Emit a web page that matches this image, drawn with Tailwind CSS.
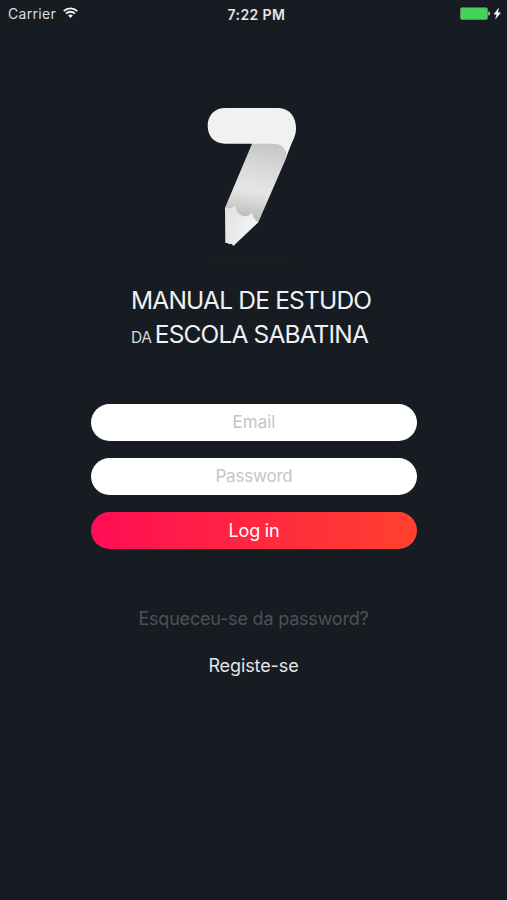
<!DOCTYPE html>
<html lang="pt">
<head>
    <meta charset="UTF-8">
    <meta name="viewport" content="width=device-width, initial-scale=1.0">
    <title>Manual de Estudo da Escola Sabatina</title>
    <script src="https://cdn.jsdelivr.net/npm/@tailwindcss/browser@4"></script>
</head>
<body class="bg-[#171c23] h-screen overflow-hidden font-['Inter',sans-serif] text-white">
    <div class="flex flex-col items-center h-full">
        <!-- Status bar -->
        <header class="w-full h-7 pl-2 pr-1.5 grid grid-cols-3 items-center text-[14px] text-[#dcdee0]">
            <div class="flex items-center gap-[7px] -mt-0.5">
                <span class="tracking-[0.3px]">Carrier</span>
                <svg class="w-[15px] h-[11px] -mt-0.5" viewBox="0 0 15 11" fill="none" stroke="#eef0f1" stroke-width="1.8">
                    <path d="M0.7 4.1a9.7 9.7 0 0 1 13.6 0M3 6.6a6.4 6.4 0 0 1 9 0" />
                    <path d="M7.5 11L5.1 8.6a3.4 3.4 0 0 1 4.8 0z" fill="#eef0f1" stroke="none" />
                </svg>
            </div>
            <div class="text-center font-semibold text-[14px] tracking-[0.4px] pl-1 text-[#e4e6e8]">7:22 PM</div>
            <div class="flex items-center justify-end -mt-0.5">
                <svg class="w-[41px] h-[13px]" viewBox="0 0 41 13">
                    <rect x="0.5" y="0.8" width="27" height="11.6" rx="1.5" fill="#44d455" stroke="#80928a" stroke-width="0.7" />
                    <path d="M28.8 4.7q1.8 1.8 0 3.6z" fill="#e6e8e9" stroke="#e6e8e9" stroke-width="0.6" />
                    <path d="M38.6 1.3L34 7.2h2.8l-1.2 4.6 5-6.1h-2.8z" fill="#fff" stroke="#fff" stroke-width="0.4" />
                </svg>
            </div>
        </header>

        <!-- Logo -->
        <svg class="w-[125px] h-[175px] mt-[67px] mr-[2px]" viewBox="0 0 375 525">
            <defs>
                <linearGradient id="body" x1="235" y1="140" x2="190" y2="370" gradientUnits="userSpaceOnUse">
                    <stop offset="0" stop-color="#c4c4c5" />
                    <stop offset="0.3" stop-color="#d6d6d7" />
                    <stop offset="0.65" stop-color="#e6e6e7" />
                    <stop offset="1" stop-color="#bebebf" />
                </linearGradient>
                <linearGradient id="tip" x1="110" y1="370" x2="190" y2="400" gradientUnits="userSpaceOnUse">
                    <stop offset="0" stop-color="#e4e4e5" />
                    <stop offset="1" stop-color="#f3f3f3" />
                </linearGradient>
            </defs>
            <path d="M187 144L105 338L120 350L150 385L205 382L290 186L280 144z" fill="url(#body)" />
            <path d="M105 338Q121 345 135 332Q140 358 160 363Q177 366 186 353Q189 374 205 382L130 453Q124 443 118 448Q112 442 106 444z" fill="url(#tip)" />
            <path d="M106 39H265C301 39 320 70 318 105C317 121 311 132 305 145L289 186C287 159 276 146 248 146H106C71 146 53 121 53 92C53 62 73 39 106 39z" fill="#f1f1f1" />
            <path d="M65 500H300" stroke="#1d1e1f" stroke-width="9" />
        </svg>

        <!-- Title -->
        <h1 class="mt-[13px] w-[245px] text-[24.5px] leading-[34px] whitespace-nowrap text-[#f0f1f3]">
            <div class="tracking-[-0.8px]">MANUAL DE ESTUDO</div>
            <div class="flex items-baseline tracking-[-0.85px]"><span class="text-[15.5px] tracking-[-0.3px] mr-[3px] text-[#d5d8da]">DA</span>ESCOLA SABATINA</div>
        </h1>

        <!-- Login form -->
        <form class="mt-[49px] ml-[1px] w-[326px] flex flex-col gap-[17.5px]">
            <input type="email" placeholder="Email" class="h-[36.5px] rounded-full bg-white text-center text-[17px] text-black placeholder:text-[#c5c5c8] outline-none">
            <input type="password" placeholder="Password" class="h-[36.5px] rounded-full bg-white text-center text-[17px] tracking-[-0.2px] text-black placeholder:text-[#c5c5c8] outline-none">
            <button type="button" class="h-[36.5px] rounded-full bg-linear-to-r/srgb from-[#ff0d55] to-[#ff412d] text-[18px] tracking-[-0.2px]">Log in</button>
        </form>

        <a class="mt-[56px] text-[18px] leading-7 tracking-[-0.2px] text-[#4e5154] whitespace-nowrap">Esqueceu-se da password?</a>
        <a class="mt-[19px] text-[18px] leading-7 tracking-[-0.1px] text-[#e3e5e7]">Registe-se</a>
    </div>
</body>
</html>
